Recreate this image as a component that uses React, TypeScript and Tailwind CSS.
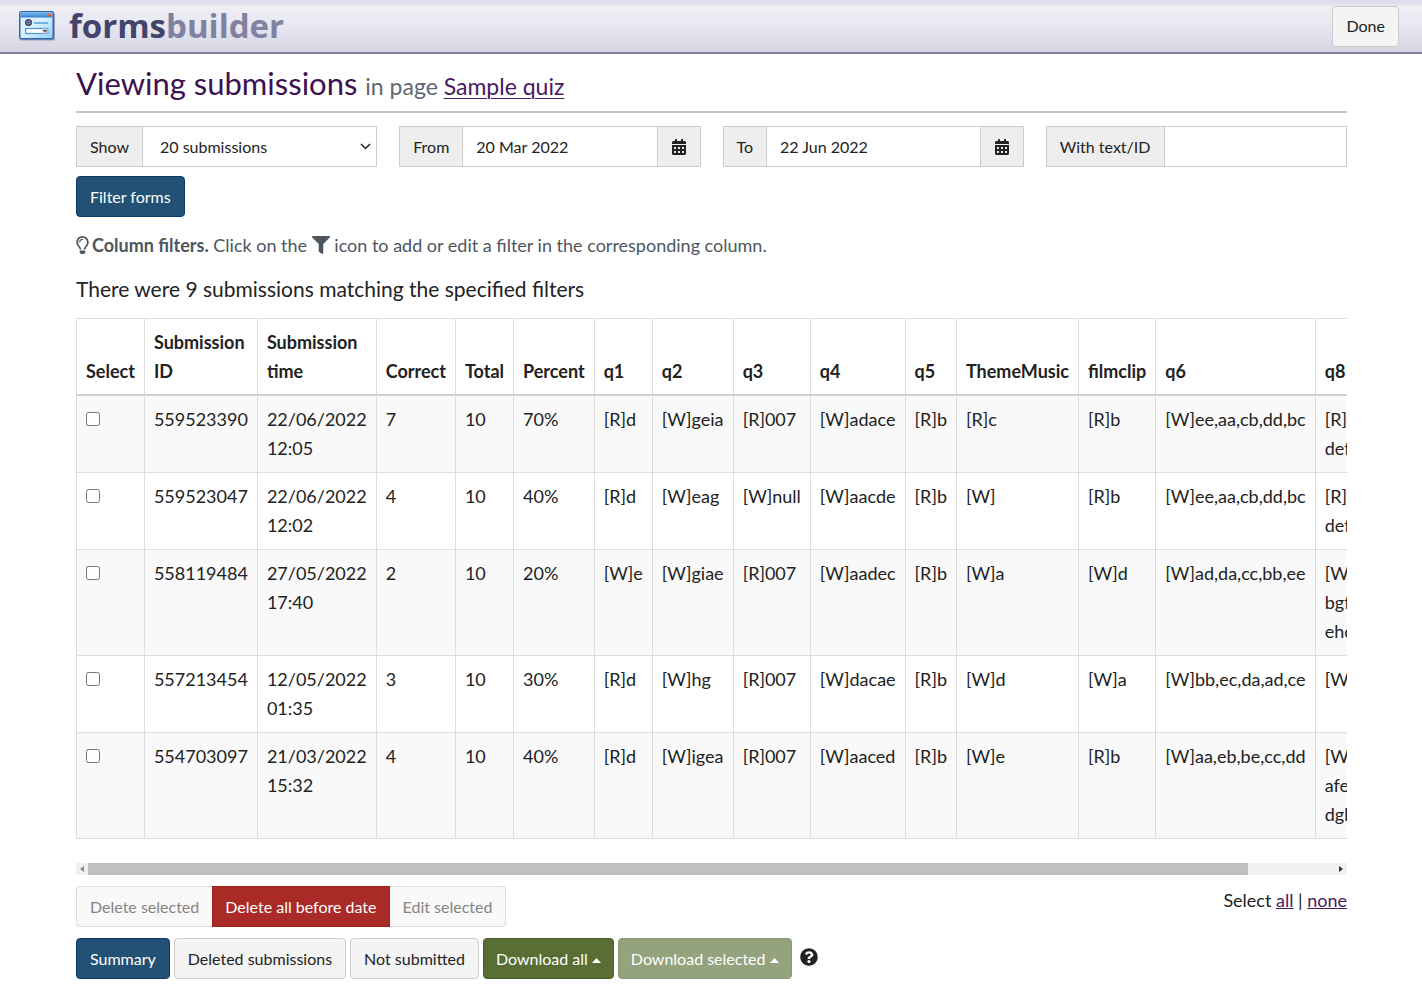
import { useState, type ReactNode } from "react";
import { FaCalendarAlt, FaFilter, FaQuestionCircle, FaRegLightbulb } from "react-icons/fa";

const columns = [
  "Correct", "Total", "Percent", "q1", "q2", "q3", "q4", "q5", "ThemeMusic", "filmclip", "q6",
];

type Submission = { id: string; date: string; time: string; answers: string[]; q8: string[] };

const submissions: Submission[] = [
  { id: "559523390", date: "22/06/2022", time: "12:05", answers: ["7", "10", "70%", "[R]d", "[W]geia", "[R]007", "[W]adace", "[R]b", "[R]c", "[R]b", "[W]ee,aa,cb,dd,bc"], q8: ["[R]abc,", "def,ghi"] },
  { id: "559523047", date: "22/06/2022", time: "12:02", answers: ["4", "10", "40%", "[R]d", "[W]eag", "[W]null", "[W]aacde", "[R]b", "[W]", "[R]b", "[W]ee,aa,cb,dd,bc"], q8: ["[R]abc,", "def,ghi"] },
  { id: "558119484", date: "27/05/2022", time: "17:40", answers: ["2", "10", "20%", "[W]e", "[W]giae", "[R]007", "[W]aadec", "[R]b", "[W]a", "[W]d", "[W]ad,da,cc,bb,ee"], q8: ["[W]acd,", "bgf,dia,", "ehc,fgb"] },
  { id: "557213454", date: "12/05/2022", time: "01:35", answers: ["3", "10", "30%", "[R]d", "[W]hg", "[R]007", "[W]dacae", "[R]b", "[W]d", "[W]a", "[W]bb,ec,da,ad,ce"], q8: ["[W]abc"] },
  { id: "554703097", date: "21/03/2022", time: "15:32", answers: ["4", "10", "40%", "[R]d", "[W]igea", "[R]007", "[W]aaced", "[R]b", "[W]e", "[R]b", "[W]aa,eb,be,cc,dd"], q8: ["[W]bci,", "afe,hgd,", "dgh,iab"] },
];

const field = "flex h-[41px] border border-[#cccccc] bg-white text-base";
const addon = "flex shrink-0 items-center bg-[#eeeeee] px-[13px]";
const button = "h-[41px] border text-base";
const plain = "rounded border-[#cccccc] bg-[#f4f4f4] px-[13px] text-[#222222]";
const blue = "rounded border-[#0c3a66] bg-[#235075] px-[13px] text-white";

function LogoIcon() {
  return (
    <svg width="36" height="30" viewBox="0 0 36 30" aria-hidden="true">
      <defs>
        <linearGradient id="paper" x1="0" y1="0" x2="1" y2="1">
          <stop offset="0" stopColor="#e4f5ff" />
          <stop offset=".5" stopColor="#d9f0ff" />
          <stop offset="1" stopColor="#8fcdf8" />
        </linearGradient>
        <linearGradient id="bar" x1="0" y1="0" x2="0" y2="1">
          <stop offset="0" stopColor="#7db8ea" />
          <stop offset="1" stopColor="#2c7fd0" />
        </linearGradient>
      </defs>
      <rect x="1" y="1.5" width="35" height="28" rx="1.5" fill="#77779a" opacity=".6" />
      <rect x=".75" y=".75" width="33.5" height="27" rx="1.5" fill="url(#paper)" stroke="#2d67b5" strokeWidth="1.5" />
      <rect x="1.5" y="1.5" width="32" height="5" fill="url(#bar)" />
      <path d="M22 4h2M26 4h2" stroke="#5796d8" strokeWidth="2" />
      <path d="M29 4h3" stroke="#e8613c" strokeWidth="2.5" />
      <circle cx="9.5" cy="11.5" r="2.8" fill="#b9bfd4" stroke="#3c3c60" strokeWidth="1.4" />
      <circle cx="9.5" cy="11.5" r="1.3" fill="#3c3c60" />
      <path d="M15 12h14" stroke="#5aa5e0" strokeWidth="1.6" />
      <rect x="6.7" y="17.5" width="22" height="5" fill="#ffffff" stroke="#4795da" strokeWidth="1.2" />
      <rect x="23" y="17.5" width="5.5" height="5" fill="#d2d2d8" />
      <path d="M24 19h4l-2 2.4z" fill="#444455" />
    </svg>
  );
}

function DateField({ id, label, initial }: { id: string; label: string; initial: string }) {
  return (
    <div className={field}>
      <label htmlFor={id} className={`${addon} border-r border-[#cccccc]`}>{label}</label>
      <input id={id} type="text" defaultValue={initial} className="w-full min-w-0 px-[13px] outline-none" />
      <button type="button" aria-label={`Choose ${label} date`} className={`${addon} border-l border-[#cccccc]`}>
        <FaCalendarAlt className="size-4" />
      </button>
    </div>
  );
}

function Th({ children }: { children: ReactNode }) {
  return <th scope="col" className="border border-b-2 border-[#dddddd] border-b-[#d2d2d2] px-[9px] pt-[9px] pb-2 text-left align-bottom font-bold">{children}</th>;
}

function Td({ children }: { children: ReactNode }) {
  return <td className="border border-[#dddddd] px-[9px] py-[9px] align-top">{children}</td>;
}

function Caret() {
  return <svg width="9" height="5" viewBox="0 0 9 5" className="ml-1 inline-block" aria-hidden="true"><path d="M0 5L4.500 0L9 5z" fill="currentColor" /></svg>;
}

export default function App() {
  const [selected, setSelected] = useState<string[]>([]);
  const toggle = (id: string) =>
    setSelected(selected.includes(id) ? selected.filter((s) => s !== id) : [...selected, id]);

  return (
    <div className="min-h-screen bg-white font-['Lato',sans-serif] text-[#222222]">
      <header className="flex h-[54px] items-center justify-between border-b-2 border-[#8080a2] bg-[linear-gradient(#dcdcec_0px,#dedeed_3px,#f0eff6_7px,#e6e6f1_28px,#d5d5e3_52px)] pr-[23px] pl-[19px]">
        <div className="flex items-center gap-3.5">
          <LogoIcon />
          <div className="font-['Open_Sans',sans-serif] text-[33px]/[52px] font-bold text-[#43436b]">
            forms<span className="text-[#8182a0]">builder</span>
          </div>
        </div>
        <button type="button" className={`${button} ${plain}`}>Done</button>
      </header>

      <main className="pr-[75px] pl-[76px]">
        <h1 className="border-b-2 border-[#c5c5c5] pt-[9px] pb-1 text-[31px]/[41px] text-[#3d1152]">
          Viewing submissions{" "}
          <small className="text-[23px] text-[#5d6873]">in page <a href="#quiz" className="text-[#4a1a63] underline underline-offset-3 decoration-1">Sample quiz</a></small>
        </h1>

        <form className="mt-[13px]" onSubmit={(e) => e.preventDefault()}>
          <div className="grid grid-cols-4 gap-[22px]">
            <div className={field}>
              <label htmlFor="show" className={`${addon} border-r border-[#cccccc]`}>Show</label>
              <div className="relative flex min-w-0 flex-1">
                <select id="show" className="w-full appearance-none pr-8 pl-[17px] outline-none">
                  <option>20 submissions</option>
                  <option>50 submissions</option>
                </select>
                <svg className="pointer-events-none absolute inset-y-0 right-[5px] my-auto" width="11" height="7" viewBox="0 0 11 7" fill="none" stroke="#222222" strokeWidth="1.5" aria-hidden="true">
                  <path d="M1 1l4.500 4.500L10 1" />
                </svg>
              </div>
            </div>
            <DateField id="from" label="From" initial="20 Mar 2022" />
            <DateField id="to" label="To" initial="22 Jun 2022" />
            <div className={field}>
              <label htmlFor="text" className={`${addon} border-r border-[#cccccc]`}>With text/ID</label>
              <input id="text" type="text" className="w-full min-w-0 px-[13px] outline-none" />
            </div>
          </div>
          <button type="submit" className={`${button} ${blue} mt-[9px]`}>Filter forms</button>
        </form>

        <p className="mt-3.5 text-lg/[29px] text-[#4d565f]">
          <FaRegLightbulb className="mr-[3px] inline size-[18px] w-[13px] align-[-2px]" />
          <strong>Column filters.</strong> Click on the <FaFilter className="inline size-[18px] align-[-2px]" /> icon to add or edit a filter in the corresponding column.
        </p>
        <h2 className="mt-3.5 text-[21px]/[30px]">There were 9 submissions matching the specified filters</h2>

        <div className="mt-3.5 overflow-x-auto [scrollbar-width:none]">
          <table className="border-collapse text-lg/[29px] whitespace-nowrap">
            <thead>
              <tr>
                <Th>Select</Th>
                <Th>Submission<br />ID</Th>
                <Th>Submission<br />time</Th>
                {columns.map((c) => <Th key={c}>{c}</Th>)}
                <Th><span className="block w-[150px]">q8</span></Th>
              </tr>
            </thead>
            <tbody>
              {submissions.map((s) => (
                <tr key={s.id} className="odd:bg-[#f9f9f9]">
                  <Td>
                    <input type="checkbox" aria-label={`Select ${s.id}`} checked={selected.includes(s.id)} onChange={() => toggle(s.id)} className="mt-[7px] block size-3.5" />
                  </Td>
                  <Td>{s.id}</Td>
                  <Td>{s.date}<br />{s.time}</Td>
                  {s.answers.map((a, i) => <Td key={i}>{a}</Td>)}
                  <Td>{s.q8.map((line) => <div key={line}>{line}</div>)}</Td>
                </tr>
              ))}
            </tbody>
          </table>
        </div>

        <div className="mt-6 flex h-3 items-stretch bg-[#f0f0f0]" aria-hidden="true">
          <div className="flex w-3 items-center justify-center"><svg width="4" height="6" viewBox="0 0 4 6"><path d="M4 0v6L0 3z" fill="#8a8a8a" /></svg></div>
          <div className="flex flex-1"><div className="w-[93%] bg-[#c0c0c0]" /></div>
          <div className="flex w-3 items-center justify-center"><svg width="4" height="6" viewBox="0 0 4 6"><path d="M0 0v6l4-3z" fill="#333333" /></svg></div>
        </div>

        <div className="mt-[11px] flex items-start justify-between">
          <div className="flex">
            <button type="button" disabled className={`${button} rounded-l border-r-0 border-[#dddddd] bg-[#f9f9f9] px-[13px] text-[#858585]`}>Delete selected</button>
            <button type="button" className={`${button} border-[#a02020] bg-[#a92a26] px-3 text-white`}>Delete all before date</button>
            <button type="button" disabled className={`${button} rounded-r border-l-0 border-[#dddddd] bg-[#f9f9f9] px-[13px] text-[#858585]`}>Edit selected</button>
          </div>
          <p className="text-lg/[29px]">
            Select <a href="#all" className="text-[#4a1a63] underline" onClick={() => setSelected(submissions.map((s) => s.id))}>all</a> | <a href="#none" className="text-[#4a1a63] underline" onClick={() => setSelected([])}>none</a>
          </p>
        </div>

        <div className="mt-[11px] flex flex-wrap gap-1">
          <button type="button" className={`${button} ${blue}`}>Summary</button>
          <button type="button" className={`${button} ${plain}`}>Deleted submissions</button>
          <button type="button" className={`${button} ${plain}`}>Not submitted</button>
          <button type="button" className={`${button} rounded border-[#475d28] bg-[#586e35] px-3 text-white`}>Download all<Caret /></button>
          <button type="button" disabled className={`${button} rounded border-[#8a9a72] bg-[#94a27d] px-3 text-white`}>Download selected<Caret /></button>
          <button type="button" aria-label="Help" className="ml-1 pb-1"><FaQuestionCircle className="size-[18px]" /></button>
        </div>
      </main>
    </div>
  );
}
